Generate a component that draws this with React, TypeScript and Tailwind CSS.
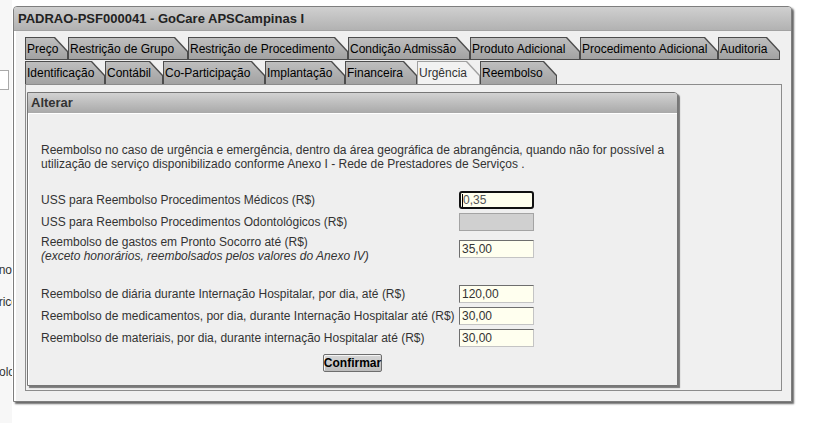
import React from 'react';

type Tab = { label: string; w: string; active?: boolean };

const rowOne: Tab[] = [
  { label: 'Preço', w: 'w-[43px]' },
  { label: 'Restrição de Grupo', w: 'w-[120px]' },
  { label: 'Restrição de Procedimento', w: 'w-[160px]' },
  { label: 'Condição Admissão', w: 'w-[122px]' },
  { label: 'Produto Adicional', w: 'w-[110px]' },
  { label: 'Procedimento Adicional', w: 'w-[138px]' },
  { label: 'Auditoria', w: 'w-[62px]' },
];

const rowTwo: Tab[] = [
  { label: 'Identificação', w: 'w-[80px]' },
  { label: 'Contábil', w: 'w-[58px]' },
  { label: 'Co-Participação', w: 'w-[102px]' },
  { label: 'Implantação', w: 'w-[80px]' },
  { label: 'Financeira', w: 'w-[72px]' },
  { label: 'Urgência', w: 'w-[63px]', active: true },
  { label: 'Reembolso', w: 'w-[77px]' },
];

const clip = '[clip-path:polygon(0_0,calc(100%_-_13px)_0,100%_14px,100%_100%,0_100%)]';

const TabItem: React.FC<{ tab: Tab; bottom?: boolean }> = ({ tab, bottom }) => (
  <div
    className={`${tab.w} h-[23px] p-[1px] ${bottom ? '' : 'pb-0'} ${clip} ${tab.active ? 'bg-[#a0a0a0]' : 'bg-[#4c4c4c]'}`}
  >
    <div
      className={`h-full flex items-center pl-[1px] whitespace-nowrap ${clip} ${tab.active ? 'bg-[#f2f2f2] text-[#333]' : 'bg-gradient-to-b from-[#bebebe] to-[#a2a2a2] text-black'}`}
    >
      {tab.label}
    </div>
  </div>
);

const Field: React.FC<{ value?: string; focused?: boolean; disabled?: boolean }> = ({ value, focused, disabled }) => {
  if (disabled) return <div className="w-[75px] h-[18px] border border-[#a4a4a4] bg-[#d0d0d0]" />;
  if (focused)
    return (
      <div className="w-[75px] h-[18px] border-2 border-[#111] rounded-[3px] bg-[#ffffee] flex items-center pl-[1px] text-[#555]">
        <span className="w-[1px] h-[13px] bg-black" />
        <span>{value}</span>
      </div>
    );
  return (
    <div className="w-[75px] h-[18px] border border-t-[#6e6e6e] border-l-[#6e6e6e] border-r-[#c4c4c4] border-b-[#c4c4c4] bg-[#ffffef] flex items-center pl-[2px] text-[#333]">
      {value}
    </div>
  );
};

const Row: React.FC<{ children: React.ReactNode; className?: string }> = ({ children, className = '' }) => (
  <div className={`flex items-center ${className}`}>{children}</div>
);

export default function App() {
  return (
    <div className="relative w-[817px] h-[423px] overflow-hidden bg-white font-['Liberation_Sans',Arial,sans-serif] text-[12px] text-[#222]">
      {/* page underneath the window, mostly hidden by it */}
      <div className="w-[12px] h-full bg-[#f7f7f7] flex flex-col pt-[70px] overflow-hidden">
        <div className="h-[20px] w-[29px] -ml-[20px] border border-[#a9a9a9] bg-white" />
        <div className="mt-[173px] flex justify-end whitespace-nowrap leading-[14px] text-[#333]">
          <span>Interno</span>
        </div>
        <div className="mt-[18px] flex justify-end whitespace-nowrap leading-[14px] text-[#333]">
          <span className="-mr-[6px]">Histórico</span>
        </div>
        <div className="mt-[56px] flex justify-end whitespace-nowrap leading-[14px] text-[#333]">
          <span className="-mr-[3px]">Protocolo</span>
        </div>
      </div>

      {/* window */}
      <div className="absolute left-[13px] top-[6px] w-[779px] h-[396px] flex flex-col border border-[#7e7e7e] rounded-t-[4px] bg-[#f0f0f0] shadow-[2px_2px_2px_rgba(0,0,0,0.6)]">
        <div className="h-[24px] shrink-0 flex items-center pl-[4px] rounded-t-[3px] bg-gradient-to-b from-[#d0d0d0] to-[#b2b2b2] border-b border-[#a2a2a2] font-bold text-[13px] text-[#222]">
          PADRAO-PSF000041 - GoCare APSCampinas I
        </div>

        <div className="flex-1 flex flex-col pt-[6px] pl-[11px] pr-[9px] pb-[10px] shadow-[inset_2px_0_0_#fff]">
          <div className="flex flex-col gap-[1px]">
            <div className="flex">
              {rowOne.map((t) => (
                <TabItem key={t.label} tab={t} bottom />
              ))}
            </div>
            <div className="flex">
              {rowTwo.map((t) => (
                <TabItem key={t.label} tab={t} />
              ))}
            </div>
          </div>

          <div className="flex-1 border border-[#8c8c8c] bg-[#f0f0f0] pt-[7px] pl-[1px]">
            <div className="w-[651px] h-[294px] flex flex-col border border-[#767676] rounded-tr-[4px] bg-[#efefef] shadow-[2px_2px_1px_rgba(0,0,0,0.5)]">
              <div className="h-[20px] shrink-0 flex items-center pl-[3px] rounded-tr-[3px] bg-gradient-to-b from-[#d2d2d2] to-[#a9a9a9] font-bold text-[13px] text-[#333]">
                Alterar
              </div>

              <div className="flex-1 flex flex-col pt-[30px] pl-[13px] text-[#333] shadow-[inset_1px_1px_0_#fff]">
                <p className="leading-[14px]">
                  Reembolso no caso de urgência e emergência, dentro da área geográfica de abrangência, quando não for possível a
                  <br />
                  utilização de serviço disponibilizado conforme Anexo I - Rede de Prestadores de Serviços .
                </p>

                <div className="mt-[20px] flex flex-col gap-[4px]">
                  <Row>
                    <span className="w-[418px]">USS para Reembolso Procedimentos Médicos (R$)</span>
                    <Field value="0,35" focused />
                  </Row>
                  <Row>
                    <span className="w-[418px]">USS para Reembolso Procedimentos Odontológicos (R$)</span>
                    <Field disabled />
                  </Row>
                  <Row>
                    <div className="w-[418px] leading-[14px]">
                      <div>Reembolso de gastos em Pronto Socorro até (R$)</div>
                      <div className="italic">(exceto honorários, reembolsados pelos valores do Anexo IV)</div>
                    </div>
                    <Field value="35,00" />
                  </Row>
                  <Row className="mt-[18px]">
                    <span className="w-[418px]">Reembolso de diária durante Internação Hospitalar, por dia, até (R$)</span>
                    <Field value="120,00" />
                  </Row>
                  <Row>
                    <span className="w-[418px]">Reembolso de medicamentos, por dia, durante Internação Hospitalar até (R$)</span>
                    <Field value="30,00" />
                  </Row>
                  <Row>
                    <span className="w-[418px]">Reembolso de materiais, por dia, durante internação Hospitalar até (R$)</span>
                    <Field value="30,00" />
                  </Row>
                  <button className="mt-[3px] ml-[282px] self-start w-[59px] h-[18px] flex items-center justify-center border border-[#6e6e6e] rounded-[2px] bg-gradient-to-b from-[#d6d6d6] to-[#bdbdbd] shadow-[inset_1px_1px_0_#f4f4f4] font-bold text-[12px] text-black">
                    Confirmar
                  </button>
                </div>
              </div>
            </div>
          </div>
        </div>
      </div>
    </div>
  );
}
